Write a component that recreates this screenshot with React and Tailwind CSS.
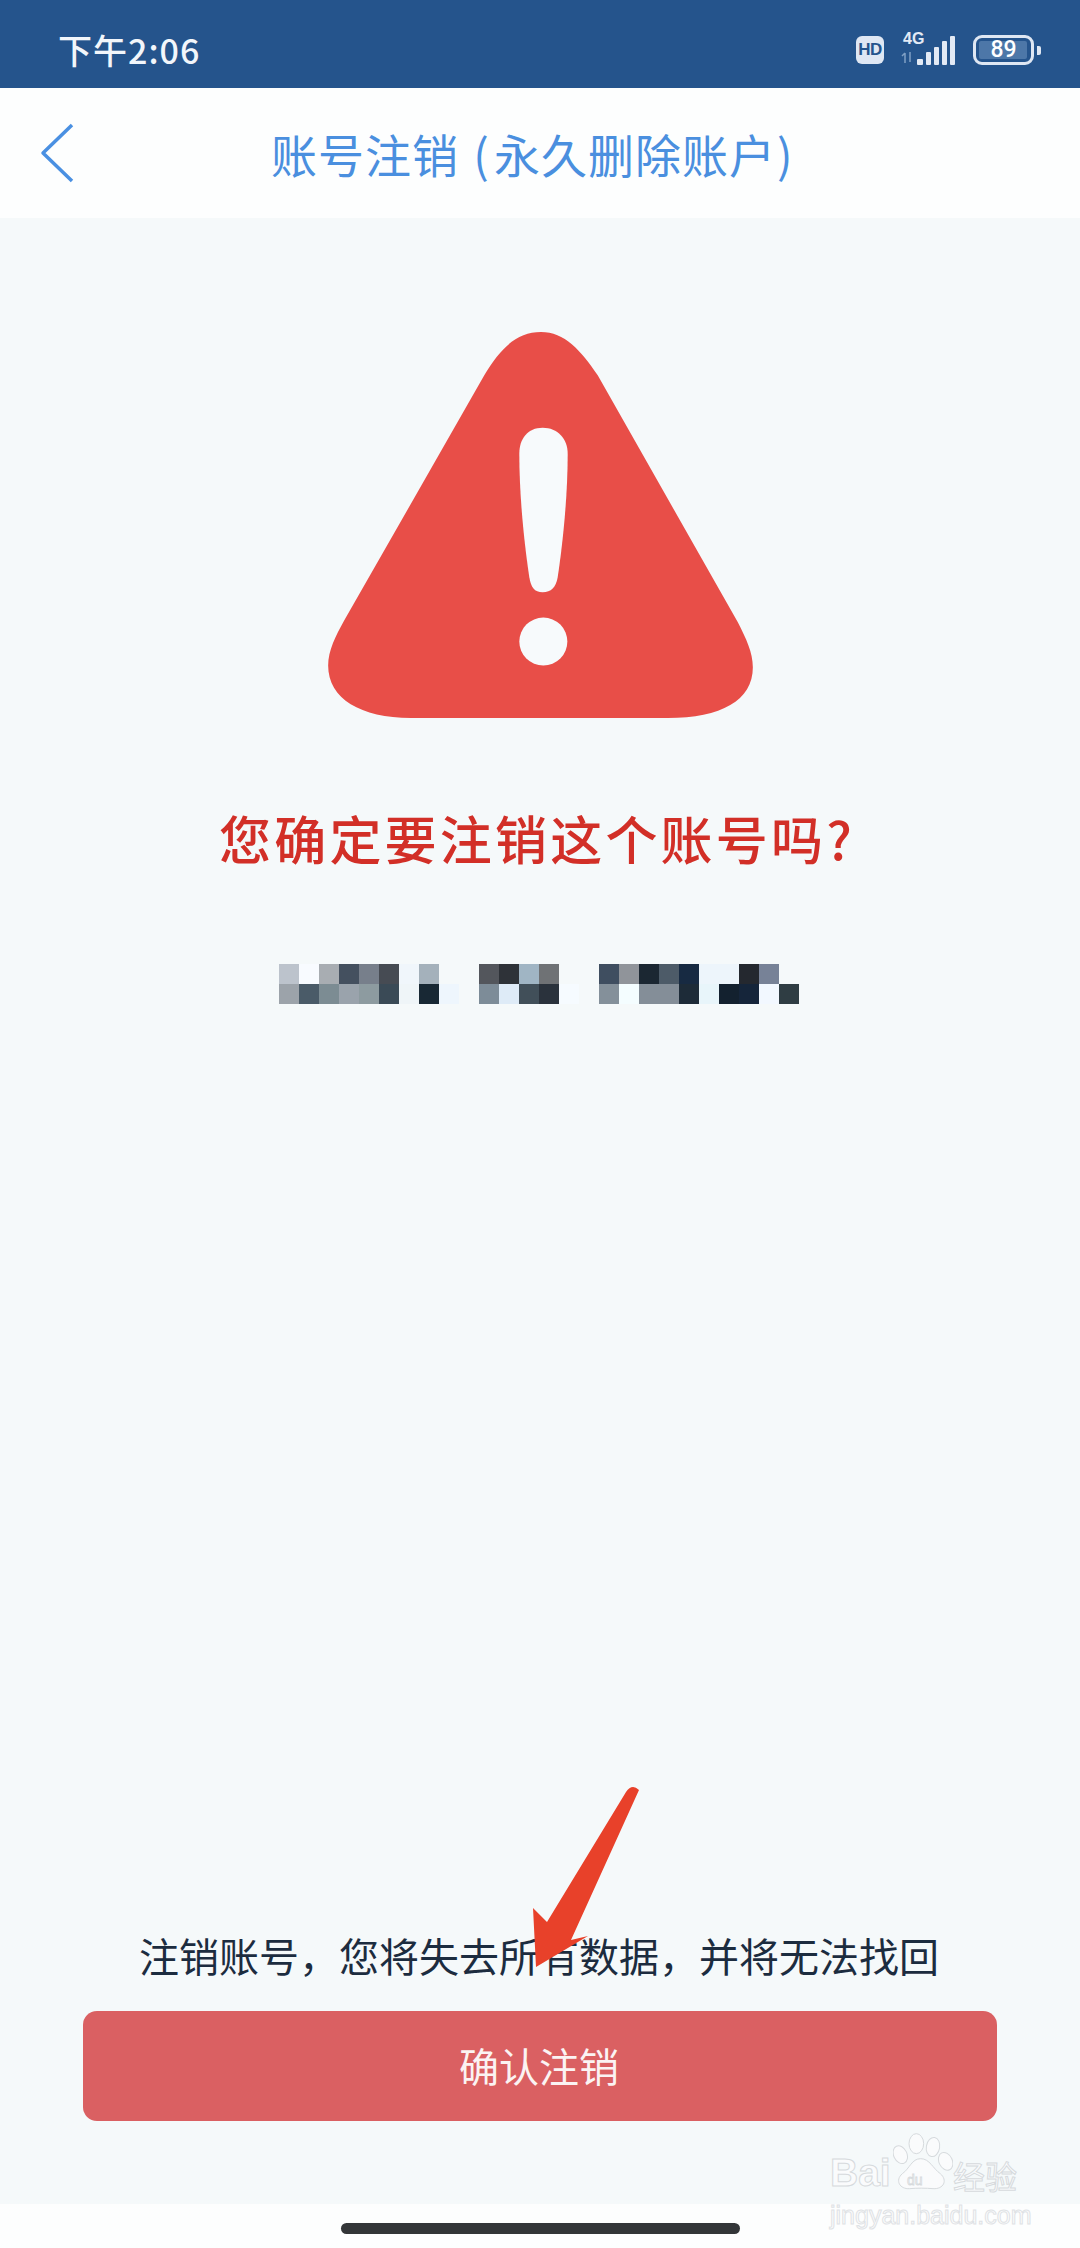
const CJK = '[font-family:"Noto_Sans_CJK_SC","Noto_Sans",sans-serif]'

// the blurred-out account line, two rows of mosaic cells
const MOSAIC = [
  ['#bcc3cc', '#f8fbff', '#a8adb2', '#44505f', '#777f8b', '#464b53', '#f0f6fb', '#a4b1bb', null, null, '#53565c', '#2e3238', '#a0b5c4', '#6f7275', null, null, '#3f4e60', '#90949a', '#1b2732', '#4d5b68', '#172a42', '#edf5fb', '#edf5fb', '#24282f', '#778297', null],
  ['#9ca3aa', '#4a5b68', '#7c8c93', '#9aa3ac', '#8d9ba0', '#3a4a56', '#eff5f8', '#182834', '#eef6fd', null, '#7d8c98', '#deebf7', '#414f59', '#2a323c', '#f6fbff', null, '#84909a', '#f4fdff', '#848e98', '#848e98', '#1d2b38', '#e8f5fa', '#13212f', '#15253a', '#f2f8ff', '#2f3d43'],
]

const StatusIcons = () => (
  <div className="flex items-center">
    <div className="flex h-[28px] w-[28px] items-center justify-center rounded-[6px] bg-[#dfe7f3] font-['Liberation_Sans',sans-serif] text-[17px] font-bold tracking-[-0.5px] text-[#25548c]">
      HD
    </div>
    {/* network: 4G label sits over the signal bars */}
    <div className="relative ml-[16px] h-[32px] w-[58px]">
      <span className="absolute left-[3px] top-[-3px] font-['Liberation_Sans',sans-serif] text-[16px] leading-[16px] font-bold text-[#e3eaf5]">4G</span>
      <svg className="absolute left-0 top-0" width="58" height="32" viewBox="0 0 58 32">
        <path d="M5 29V19M5 19l-3 3M10 18v10" stroke="#7f9fc4" strokeWidth="1.500" fill="none" />
        <rect x="17" y="25" width="6" height="6" rx="1" fill="#e3eaf5" />
        <rect x="26" y="18" width="5" height="13" rx="1" fill="#e3eaf5" />
        <rect x="34" y="13" width="5" height="18" rx="1" fill="#e3eaf5" />
        <rect x="42" y="7" width="5" height="24" rx="1" fill="#e3eaf5" />
        <rect x="50" y="2" width="5" height="29" rx="1" fill="#e3eaf5" />
      </svg>
    </div>
    <div className="ml-[15px] flex items-center">
      <div className="relative flex h-[30px] w-[61px] items-center rounded-[9px] border-[3px] border-[#dfe7f3] p-[3px]">
        <div className="h-full w-[48px] rounded-[2px] bg-[#4d77a8]" />
        <span className="absolute inset-0 flex items-center justify-center font-['Roboto',sans-serif] text-[23px] font-medium text-white">89</span>
      </div>
      <div className="ml-[3px] h-[9px] w-[4px] rounded-r-[2px] bg-[#dfe7f3]" />
    </div>
  </div>
)

const WarningTriangle = () => (
  <svg className="mt-[114px] block" width="425" height="386" viewBox="82 65 1273 1157">
    <path
      fill="#e84e48"
      d="M720 65C790 65 840 120 890 195L1310 935C1335 985 1355 1025 1355 1070C1355 1170 1260 1222 1100 1222L330 1222C180 1222 82 1165 82 1065C82 1020 105 975 130 930L550 195C600 110 650 65 720 65Z"
    />
    <path
      fill="#f7fafc"
      d="M725 352C770 352 800 385 800 430C800 560 785 700 770 800C765 830 750 845 725 845C700 845 690 830 685 800C670 700 655 560 655 430C655 385 680 352 725 352Z"
    />
    <circle cx="727" cy="993" r="72" fill="#f7fafc" />
  </svg>
)

const Watermark = () => (
  <div className="absolute left-[820px] top-[2125px] h-[105px] w-[210px]">
    <span className="absolute left-[10px] top-[26px] font-['Liberation_Sans',sans-serif] text-[39px] leading-[44px] font-bold text-[#fafbfc] [-webkit-text-stroke:1px_#d6dadd]">Bai</span>
    <svg className="absolute left-[73px] top-[7px]" width="60" height="60" viewBox="220 20 180 180">
      <g fill="#fafbfc" stroke="#d6dadd" strokeWidth="3">
        <ellipse cx="242" cy="88" rx="20" ry="28" transform="rotate(-25 242 88)" />
        <ellipse cx="290" cy="55" rx="22" ry="30" />
        <ellipse cx="340" cy="65" rx="20" ry="29" transform="rotate(10 340 65)" />
        <ellipse cx="378" cy="108" rx="20" ry="28" transform="rotate(-25 378 108)" />
        <path d="M303 100C330 100 340 130 362 145C385 165 372 192 340 190C320 188 290 188 270 190C240 192 225 165 248 145C270 130 276 100 303 100Z" />
      </g>
      <text x="262" y="178" fontFamily="'Liberation Sans',sans-serif" fontSize="42" fill="#fafbfc" stroke="#d6dadd" strokeWidth="2.500">du</text>
    </svg>
    <span className={`absolute left-[133px] top-[30px] ${CJK} text-[32px] leading-[40px] text-[#fafbfc] [-webkit-text-stroke:1px_#d6dadd]`}>经验</span>
    <span className="absolute left-[10px] top-[76px] font-['Liberation_Sans',sans-serif] text-[25px] leading-[28px] text-[#fdfefe] [-webkit-text-stroke:1px_#dfe2e5]">jingyan.baidu.com</span>
  </div>
)

export default function App() {
  return (
    <div className={`relative flex h-[2248px] w-[1080px] flex-col overflow-hidden bg-[#f5f9fa] ${CJK}`}>
      {/* status bar */}
      <div className="flex h-[88px] items-center justify-between bg-[#25548c] pt-[12px] pl-[58px] pr-[39px]">
        <span className="text-[34px] leading-[40px] font-medium tracking-[1px] text-[#f2f6fb]">下午2:06</span>
        <StatusIcons />
      </div>

      {/* nav */}
      <div className="flex h-[130px] items-center bg-[#fdfefe] pl-[40px]">
        <svg width="34" height="60" viewBox="0 0 34 60">
          <path d="M32 2L3 30L32 58" fill="none" stroke="#4a90e2" strokeWidth="3.500" strokeLinejoin="round" />
        </svg>
        <h1 className="ml-[197px] text-[46px] leading-[60px] font-normal tracking-[1px] text-[#4a8fdf]">
          账号注销 <span className="mr-[4px] ml-[3px]">(</span>永久删除账户<span className="ml-[1px]">)</span>
        </h1>
      </div>

      <main className="flex flex-1 flex-col items-center">
        <WarningTriangle />
        <h2 className="mt-[90px] -ml-[6px] text-[52px] leading-[60px] font-medium tracking-[3.200px] text-[#d22f27]">您确定要注销这个账号吗?</h2>

        <div className="mt-[96px] ml-[279px] flex flex-col self-start">
          {MOSAIC.map((row, r) => (
            <div key={r} className="flex">
              {row.map((c, i) => (
                <div key={i} className="h-[20px] w-[20px]" style={{ background: c || 'transparent' }} />
              ))}
            </div>
          ))}
        </div>

        <p className="mt-auto -ml-[2px] text-[40px] leading-[48px] text-[#1c2c3f]">注销账号，您将失去所有数据，并将无法找回</p>
        <button className="mt-[32px] mb-[83px] flex h-[110px] w-[914px] items-center justify-center rounded-[14px] bg-[#da6062] pr-[2px] pb-[2px] text-[40px] text-[#fbf3f3]">
          确认注销
        </button>
      </main>

      {/* home indicator */}
      <div className="flex h-[44px] justify-center bg-[#fdfefe] pt-[19px]">
        <div className="h-[11px] w-[399px] rounded-full bg-[#333638]" />
      </div>

      {/* annotation arrow, drawn over the page */}
      <svg className="absolute left-[520px] top-[1780px]" width="130" height="195" viewBox="520 1780 130 195">
        <path fill="#e8412a" d="M626 1792Q632 1783 639 1790L571 1940L588 1936L536 1967L533 1908L547 1922Z" />
      </svg>

      <Watermark />
    </div>
  )
}
